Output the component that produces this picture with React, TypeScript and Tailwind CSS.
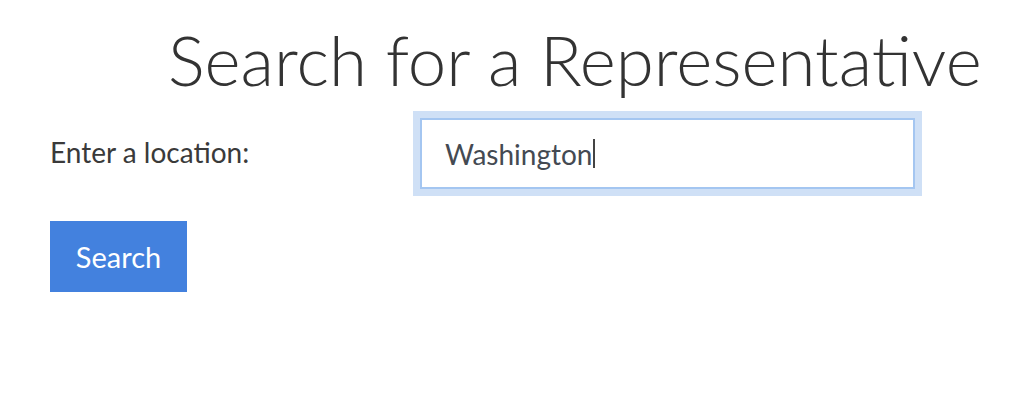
export default function App() {
  return (
    <div className="w-[1016px] h-[414px] bg-white text-[#333] overflow-hidden" style={{ fontFamily: "Lato, 'Noto Sans', sans-serif" }}>
      <h1 className="pl-[168px] pt-[20px] text-[69px] font-light leading-[80px] text-[#333] whitespace-nowrap">
        Search for a Representative
      </h1>
      <div className="flex items-center pl-[50px] mt-[18px]">
        <label className="w-[370px] text-[28px] text-[#3a3a3a] -mt-[4px]">Enter a location:</label>
        <div className="w-[495px] h-[71px] border-2 border-[#a4c6f1] shadow-[0_0_0_7px_#cfe0f6] bg-white flex items-center pl-[23px]">
          <span className="text-[28px] text-[#444a52]">Washington</span>
          <span className="w-[2px] h-[29px] bg-[#444] ml-[1px]"></span>
        </div>
      </div>
      <button className="ml-[50px] mt-[32px] w-[137px] h-[71px] bg-[#4381de] text-white text-[29px]">
        Search
      </button>
    </div>
  );
}
